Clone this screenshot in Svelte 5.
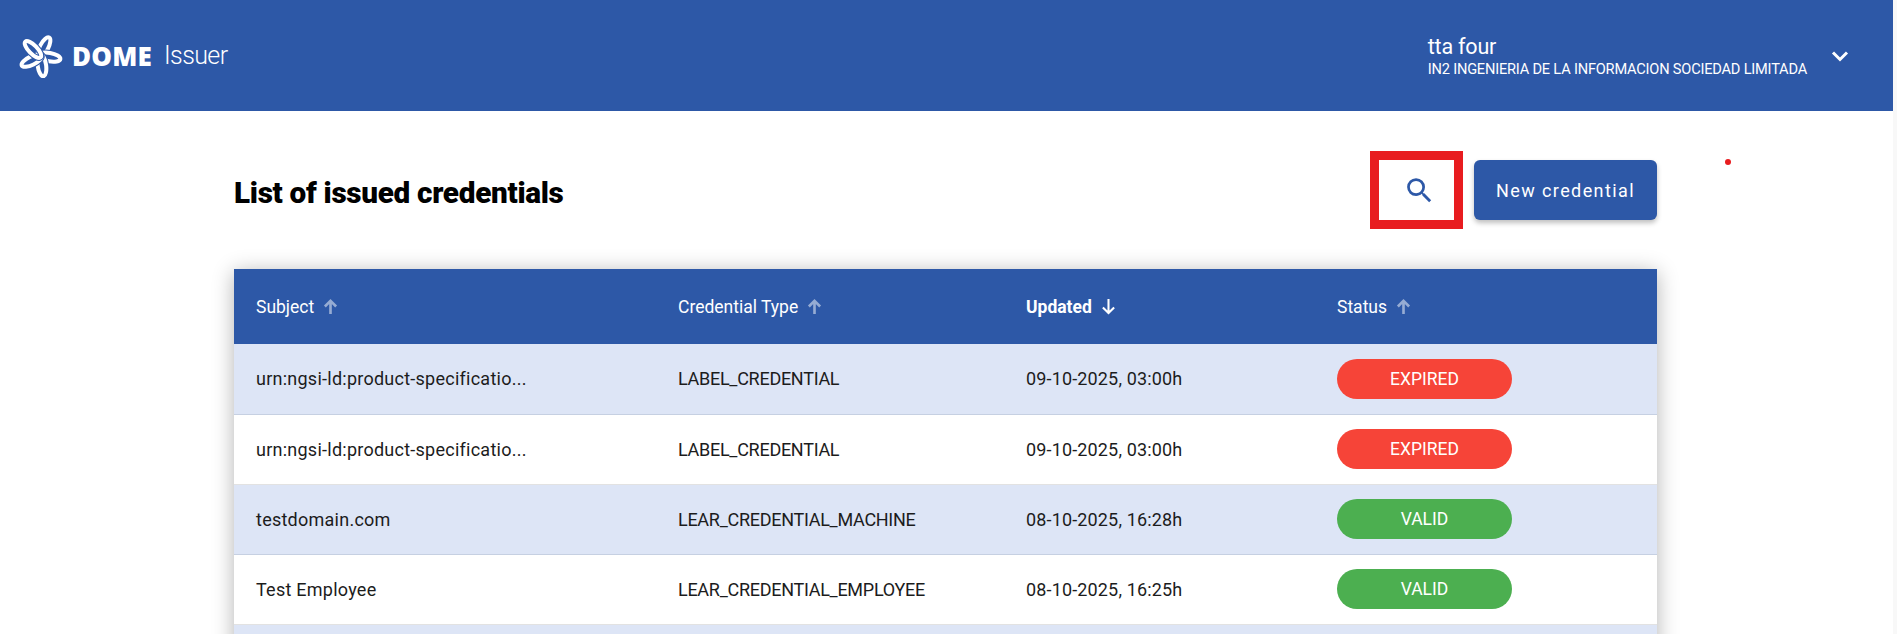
<script lang="ts">
  const rows = [
    { subject: 'urn:ngsi-ld:product-specificatio...', type: 'LABEL_CREDENTIAL', updated: '09-10-2025, 03:00h', status: 'EXPIRED' },
    { subject: 'urn:ngsi-ld:product-specificatio...', type: 'LABEL_CREDENTIAL', updated: '09-10-2025, 03:00h', status: 'EXPIRED' },
    { subject: 'testdomain.com', type: 'LEAR_CREDENTIAL_MACHINE', updated: '08-10-2025, 16:28h', status: 'VALID' },
    { subject: 'Test Employee', type: 'LEAR_CREDENTIAL_EMPLOYEE', updated: '08-10-2025, 16:25h', status: 'VALID' },
    // only the top edge of this row is on screen
    { subject: '', type: '', updated: '', status: '' }
  ];
  const columns = [
    { label: 'Subject', active: false },
    { label: 'Credential Type', active: false },
    { label: 'Updated', active: true },
    { label: 'Status', active: false }
  ];
</script>

<div class="page">
  <header class="topbar">
    <div class="brand">
      <svg class="logo" viewBox="0 0 48 48" width="46" height="44" fill="none">
        {#each [0, 72, 144, 216, 288] as angle}
          <g transform="rotate({angle + 8} 24 24)">
            <ellipse cx="27" cy="14" rx="4.6" ry="12" transform="rotate(20 27 14)" stroke="#2d58a7" stroke-width="6.6" />
            <ellipse cx="27" cy="14" rx="4.6" ry="12" transform="rotate(20 27 14)" stroke="#fff" stroke-width="4.4" />
          </g>
        {/each}
      </svg>
      <span class="dome">DOME</span>
      <span class="issuer">Issuer</span>
    </div>
    <div class="user">
      <div class="who">
        <div class="name">tta four</div>
        <div class="org">IN2 INGENIERIA DE LA INFORMACION SOCIEDAD LIMITADA</div>
      </div>
      <svg class="chevron" viewBox="0 0 18 12" width="18" height="12" fill="none">
        <path d="M2 2.5 L9 9.5 L16 2.5" stroke="#fff" stroke-width="3" />
      </svg>
    </div>
  </header>

  <main class="content">
    <div class="heading">
      <h1>List of issued credentials</h1>
      <div class="tools">
        <button class="search" aria-label="Search">
          <svg viewBox="0 0 24 24" width="33" height="33" fill="#2d58a7">
            <path d="M15.5 14h-.79l-.28-.27A6.47 6.47 0 0 0 16 9.5 6.5 6.5 0 1 0 9.5 16c1.61 0 3.09-.59 4.23-1.57l.27.28v.79l5 4.99L20.49 19l-4.99-5zm-6 0C7.01 14 5 11.99 5 9.5S7.01 5 9.5 5 14 7.01 14 9.5 11.99 14 9.5 14z" />
          </svg>
        </button>
        <button class="create">New credential</button>
      </div>
      <span class="dot"></span>
    </div>

    <table>
      <colgroup>
        <col style="width:422px" /><col style="width:348px" /><col style="width:311px" /><col />
      </colgroup>
      <thead>
        <tr>
          {#each columns as col}
            <th class:active={col.active}>
              <span class="th">
                {col.label}
                <svg viewBox="0 0 16 18" width="15" height="17" fill="none" class="sort">
                  {#if col.active}
                    <path d="M8 1V16 M2 10l6 6 6-6" stroke="currentColor" stroke-width="2.2" />
                  {:else}
                    <path d="M8 17V2.5 M2 9l6-6 6 6" stroke="currentColor" stroke-width="2.8" />
                  {/if}
                </svg>
              </span>
            </th>
          {/each}
        </tr>
      </thead>
      <tbody>
        {#each rows as row}
          <tr>
            <td class="subject">{row.subject}</td>
            <td class="type">{row.type}</td>
            <td class="date">{row.updated}</td>
            <td>
              {#if row.status}
                <span class="pill" class:valid={row.status === 'VALID'}>{row.status}</span>
              {/if}
            </td>
          </tr>
        {/each}
      </tbody>
    </table>
  </main>
</div>

<style>
  :global(body) { margin: 0; overflow: hidden; background: #f8f8f8; }
  .page { height: 634px; overflow: hidden; margin-right: 4px; background: #fff; font-family: Roboto, sans-serif; color: #1c1c1c; }

  .topbar { height: 111px; background: #2d58a7; color: #fff; display: flex; align-items: center; justify-content: space-between; padding: 0 44px 0 17px; }
  .brand { display: flex; align-items: center; }
  .logo { margin-right: 9px; }
  .dome { font-family: "Open Sans", sans-serif; font-weight: 800; font-size: 26px; letter-spacing: 0.2px; }
  .issuer { font-size: 25px; font-weight: 300; margin-left: 12px; letter-spacing: -0.6px; }
  .user { display: flex; align-items: center; gap: 24px; }
  .name { font-size: 21.5px; line-height: 26px; letter-spacing: -0.2px; }
  .org { font-size: 14.6px; line-height: 18px; letter-spacing: -0.2px; }

  .content { width: 1423px; margin: 0 0 0 234px; }
  .heading { position: relative; height: 158px; display: flex; align-items: center; justify-content: space-between; }
  h1 { margin: 4px 0 0; font-size: 29.7px; font-weight: 900; color: #000; letter-spacing: -0.3px; }
  .tools { display: flex; align-items: center; gap: 11px; }
  .search { width: 93px; height: 78px; box-sizing: border-box; border: 9px solid #e81c1f; background: #fff; padding: 0 0 0 5px; display: flex; align-items: center; justify-content: center; }
  .create { width: 183px; height: 60px; background: #2d58a7; color: #fff; border: none; border-radius: 6px; font-family: Roboto, sans-serif; font-size: 18px; letter-spacing: 1.4px; padding-top: 1px; box-shadow: 0 3px 5px rgba(0, 0, 0, 0.25); }
  .dot { position: absolute; left: 1491px; top: 48px; width: 6px; height: 6px; border-radius: 50%; background: #e81c1f; }

  table { width: 1423px; table-layout: fixed; border-collapse: collapse; box-shadow: 0 3px 20px rgba(0, 0, 0, 0.3); }
  thead tr { height: 75px; background: #2d58a7; color: #fff; }
  th { text-align: left; font-weight: 400; font-size: 17.5px; padding: 0 22px; }
  th.active { font-weight: 700; }
  .th { display: inline-flex; align-items: center; gap: 9px; }
  .sort { opacity: 0.5; }
  th.active .sort { opacity: 1; }
  tbody tr { height: 70px; background: #fff; }
  tbody tr:nth-child(odd) { background: #dde5f6; }
  td { font-size: 18px; padding: 0 22px; border-bottom: 1px solid #e2e2e2; white-space: nowrap; }
  tbody tr:nth-child(odd) td { border-bottom-color: #c6d0e2; }
  .subject { letter-spacing: 0.25px; }
  .type { letter-spacing: -0.28px; }
  .date { letter-spacing: 0.15px; }
  .pill { display: block; width: 175px; height: 40px; line-height: 40px; border-radius: 20px; text-align: center; color: #fff; background: #f64438; font-size: 17.5px; }
  .pill.valid { background: #4caf50; }
</style>
